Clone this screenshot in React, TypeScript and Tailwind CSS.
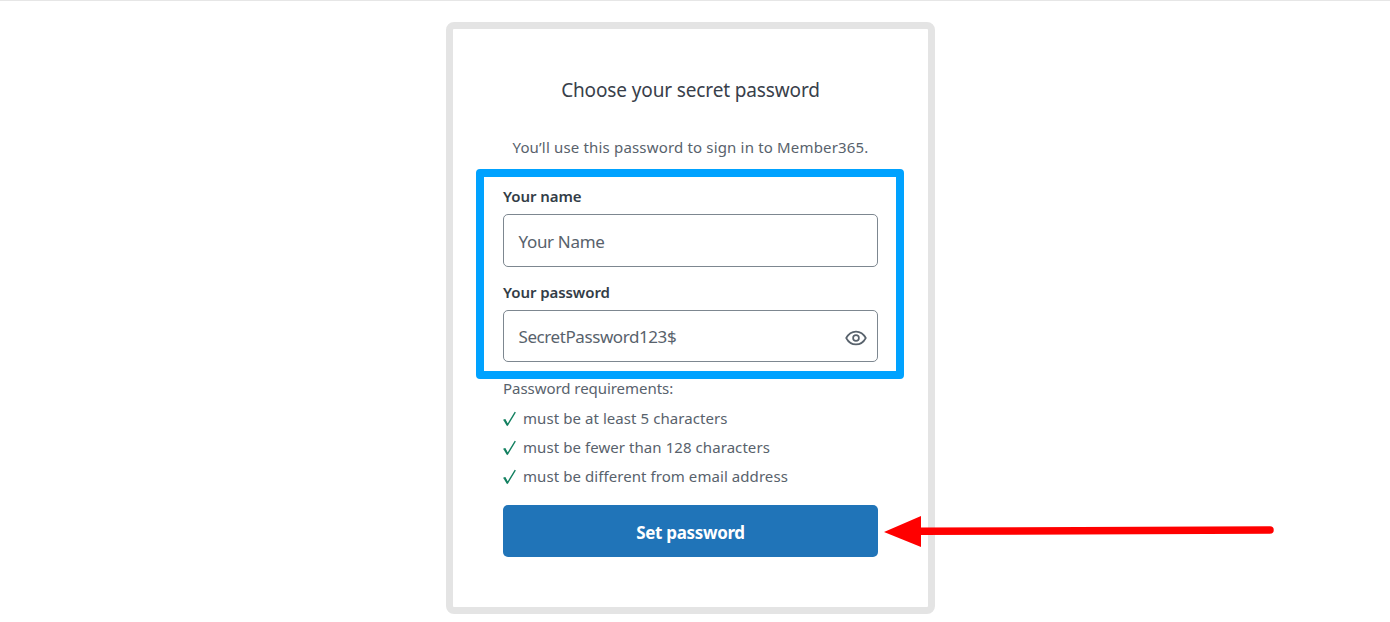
import React from 'react';

const requirements = [
  'must be at least 5 characters',
  'must be fewer than 128 characters',
  'must be different from email address',
];

function CheckIcon() {
  return (
    <svg className="w-[13px] h-[16px] text-[#138060] shrink-0" viewBox="0 0 13 16" fill="none" stroke="currentColor">
      <path d="M0.5 9.2 L2 8.8 L4.6 13.8 L12.3 1.2" strokeWidth="1.4" />
      <path d="M1.5 9.2 L4.5 14.2" strokeWidth="1.8" />
    </svg>
  );
}

function EyeIcon() {
  return (
    <svg className="w-[22px] h-[16px] text-[#58626c] shrink-0" viewBox="0 0 22 16" fill="none" stroke="currentColor" strokeWidth="1.7">
      <path d="M1.2 8 C5.8 -0.6 16.2 -0.6 20.8 8 C16.2 16.6 5.8 16.6 1.2 8 Z" strokeLinejoin="round" />
      <circle cx="11" cy="8" r="2.9" />
    </svg>
  );
}

export default function App() {
  return (
    <div className="relative w-full h-[622px] overflow-hidden bg-white border-t border-[#e6e6e6] pt-[21px] pl-[446px] font-['Noto_Sans',sans-serif] text-[#58626c]">
      <main className="w-[489px] h-[592px] border-[7px] border-[#e4e4e4] rounded-[8px] px-[50px] pt-[45px]">
        <h1 className="h-[30px] leading-[32px] text-[19px] tracking-[-0.13px] text-center whitespace-nowrap text-[#38404a]">
          Choose your secret password
        </h1>
        <p className="mt-[31px] h-6 leading-6 text-[15px] tracking-[0.17px] text-center whitespace-nowrap">
          You’ll use this password to sign in to Member365.
        </p>

        <form className="mt-[25px]">
          <label className="block h-6 leading-6 text-[15px] tracking-[-0.07px] font-semibold text-[#333d47]">
            <span>Your name</span>
          </label>
          <div className="mt-[6px] h-[53px] flex items-center px-[14.5px] border border-[#7d8790] rounded-[5px] text-[17px] tracking-[-0.33px]">
            <span className="pt-[2px]">Your Name</span>
          </div>

          <label className="mt-[13px] block h-6 leading-6 text-[15px] tracking-[-0.07px] font-semibold text-[#333d47]">
            <span>Your password</span>
          </label>
          <div className="mt-[6px] h-[52px] flex items-center justify-between pl-[14.5px] pr-[10.5px] border border-[#7d8790] rounded-[5px] text-[17px] tracking-[-0.42px]">
            <span className="pt-[2px]">SecretPassword123$</span>
            <span className="pt-[3px]">
              <EyeIcon />
            </span>
          </div>

          <p className="mt-[14px] h-6 leading-6 text-[15px] tracking-[-0.05px]">
            <span>Password requirements:</span>
          </p>
          <ul className="mt-1 text-[15px] tracking-[0.07px]">
            {requirements.map((item) => (
              <li key={item} className="h-[29px] flex items-center gap-[7px] whitespace-nowrap">
                <CheckIcon />
                <span>{item}</span>
              </li>
            ))}
          </ul>

          <button
            type="button"
            className="mt-[14px] w-full h-[52px] rounded-[5px] bg-[#2074b8] text-white text-[17px] tracking-[-0.33px] font-bold pt-[4px]"
          >
            <span>Set password</span>
          </button>
        </form>
      </main>

      {/* Highlight around the form fields */}
      <div className="absolute left-[476px] top-[168px] w-[428px] h-[210px] border-8 border-[#00a2ff] rounded-[4px] pointer-events-none"></div>

      {/* Arrow pointing at the submit button */}
      <svg className="absolute left-[880px] top-[509px] w-[400px] h-[44px] pointer-events-none" viewBox="880 510 400 44">
        <path d="M884 532 L921 516 L921 547 Z" fill="#ff0000" />
        <path d="M919 531.3 L1270 530" stroke="#ff0000" strokeWidth="7.5" strokeLinecap="round" />
      </svg>
    </div>
  );
}
